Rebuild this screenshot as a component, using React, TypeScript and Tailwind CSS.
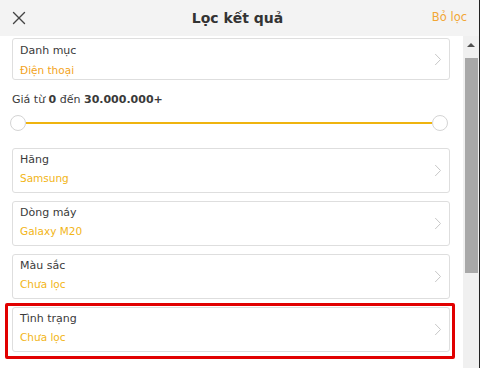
import { X } from "lucide-react";

const FILTERS = [
  { label: "Hãng", value: "Samsung" },
  { label: "Dòng máy", value: "Galaxy M20" },
  { label: "Màu sắc", value: "Chưa lọc" },
  { label: "Tình trạng", value: "Chưa lọc" },
];

const Chevron = () => (
  <svg width="8" height="13" viewBox="0 0 8 13" className="shrink-0 self-center" fill="none">
    <path d="M1.2 1 L6.5 6.5 L1.2 12" stroke="#c8c8c8" strokeWidth="1" />
  </svg>
);

const FilterCard = ({ label, value }: { label: string; value: string }) => (
  <div className="flex h-[45px] justify-between rounded-[3px] border border-[#dedede] bg-white pl-[7px] pr-[7px]">
    <div className="flex flex-col pt-[4px]">
      <span className="text-[11px] leading-[14px] text-[#3a3a3a]">{label}</span>
      <span className="mt-[4px] text-[10.5px] leading-[14px] text-[#f2b517]">{value}</span>
    </div>
    <Chevron />
  </div>
);

const App = () => {
  return (
    <div className="relative flex h-[368px] w-[480px] flex-col overflow-hidden bg-white font-['DejaVu_Sans',sans-serif]">
      {/* Header */}
      <header className="grid h-[36px] shrink-0 grid-cols-[1fr_auto_1fr] items-center border-r border-[#222] bg-[#f3f3f3] pl-[8px] pr-[12px]">
        <X className="h-[22px] w-[22px] text-[#444]" strokeWidth={1.5} />
        <h1 className="text-[14px] font-bold text-[#333]">Lọc kết quả</h1>
        <span className="justify-self-end text-[11.5px] text-[#f2a633]">Bỏ lọc</span>
      </header>

      <div className="flex min-h-0 flex-1">
        {/* Scrollable content */}
        <main className="flex w-[463px] flex-col pl-[12px] pr-[13px]">
          <div className="mt-[2px] flex h-[42px] justify-between rounded-[3px] border border-[#dedede] bg-white pl-[7px] pr-[7px]">
            <div className="flex flex-col pt-[5px]">
              <span className="text-[11px] leading-[14px] text-[#3a3a3a]">Danh mục</span>
              <span className="mt-[5px] text-[10.5px] leading-[14px] text-[#f3a322]">Điện thoại</span>
            </div>
            <Chevron />
          </div>

          <p className="mt-[13px] text-[11px] leading-[14px] text-[#3a3a3a]">
            Giá từ <b>0</b> đến <b>30.000.000+</b>
          </p>

          {/* Price slider */}
          <div className="mt-[8px] flex h-[16px] items-center">
            <div className="-ml-[2px] h-[16px] w-[16px] shrink-0 rounded-full border border-[#d4d4d4] bg-white" />
            <div className="h-[2px] flex-1 bg-[#efb40f]" />
            <div className="mr-[2px] h-[16px] w-[16px] shrink-0 rounded-full border border-[#d4d4d4] bg-white" />
          </div>

          <div className="mt-[17px] flex flex-col gap-[8px]">
            {FILTERS.map((f) => (
              <FilterCard key={f.label} label={f.label} value={f.value} />
            ))}
          </div>
        </main>

        {/* Scrollbar */}
        <div className="flex w-[17px] flex-col items-center border-r border-[#222] bg-[#f0f0f0]">
          <div className="mt-[7px] h-0 w-0 border-x-[4px] border-b-[4px] border-x-transparent border-b-[#505050]" />
          <div className="mt-[11px] h-[215px] w-[13px] bg-[#a8a8a8]" />
        </div>
      </div>

      {/* Highlight box */}
      <div className="pointer-events-none absolute left-[5px] top-[303px] h-[56px] w-[450px] rounded-[2px] border-[3px] border-[#e10000]" />
    </div>
  );
};

export default App;
